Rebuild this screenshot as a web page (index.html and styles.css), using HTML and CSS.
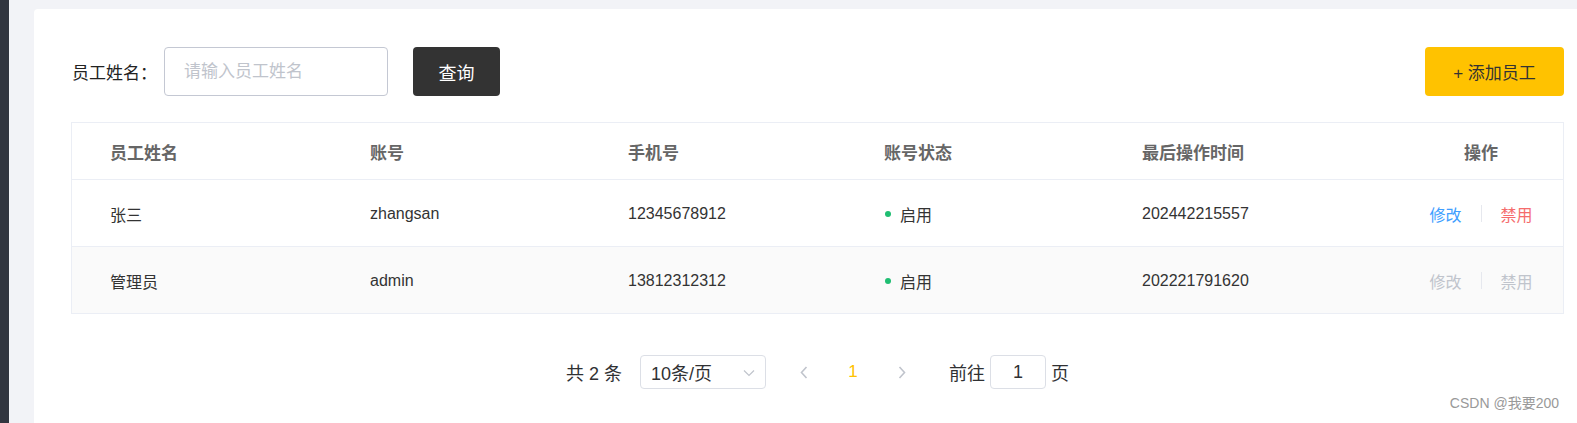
FILE: index.html
```html
<!DOCTYPE html>
<html lang="zh-CN">
<head>
<meta charset="utf-8">
<title>员工管理</title>
<link rel="stylesheet" href="styles.css">
</head>
<body>
<div class="layout">
  <aside class="sidebar"></aside>
  <main class="main">
    <section class="card">
      <div class="search-bar">
        <label class="search-label">员工姓名：</label>
        <input class="search-input" type="text" placeholder="请输入员工姓名">
        <button class="btn btn-dark">查询</button>
        <button class="btn btn-yellow">+ 添加员工</button>
      </div>

      <div class="table">
        <div class="row head">
          <div class="cell">员工姓名</div>
          <div class="cell">账号</div>
          <div class="cell">手机号</div>
          <div class="cell">账号状态</div>
          <div class="cell">最后操作时间</div>
          <div class="cell center">操作</div>
        </div>
        <div class="row">
          <div class="cell">张三</div>
          <div class="cell">zhangsan</div>
          <div class="cell">12345678912</div>
          <div class="cell"><span class="dot"></span>启用</div>
          <div class="cell">202442215557</div>
          <div class="cell center ops">
            <span class="op op-edit">修改</span><span class="sep"></span><span class="op op-ban">禁用</span>
          </div>
        </div>
        <div class="row striped">
          <div class="cell">管理员</div>
          <div class="cell">admin</div>
          <div class="cell">13812312312</div>
          <div class="cell"><span class="dot"></span>启用</div>
          <div class="cell">202221791620</div>
          <div class="cell center ops">
            <span class="op op-disabled">修改</span><span class="sep"></span><span class="op op-disabled">禁用</span>
          </div>
        </div>
      </div>

      <div class="pagination">
        <span class="total">共 2 条</span>
        <div class="select">
          <span>10条/页</span>
          <svg class="select-arrow" width="12" height="8" viewBox="0 0 12 8"><path d="M1 1.5 L6 6.5 L11 1.5" fill="none" stroke="#c0c4cc" stroke-width="1.2"/></svg>
        </div>
        <span class="pager-btn pager-prev">
          <svg width="8" height="13" viewBox="0 0 8 13"><path d="M6.5 1 L1.5 6.5 L6.5 12" fill="none" stroke="#c0c4cc" stroke-width="1.6"/></svg>
        </span>
        <span class="pager-num">1</span>
        <span class="pager-btn">
          <svg width="8" height="13" viewBox="0 0 8 13"><path d="M1.5 1 L6.5 6.5 L1.5 12" fill="none" stroke="#c0c4cc" stroke-width="1.6"/></svg>
        </span>
        <span class="jump">前往</span>
        <div class="jump-input">1</div>
        <span class="jump-suffix">页</span>
      </div>
    </section>
  </main>
</div>
<div class="watermark">CSDN @我要200</div>
</body>
</html>
```

FILE: styles.css
```css
html, body {
  margin: 0;
  padding: 0;
  height: 100%;
}
body {
  background: #f2f3f7;
  font-family: "Liberation Sans", "Noto Sans CJK SC", sans-serif;
  color: #333;
  overflow: hidden;
}
.layout {
  display: flex;
  height: 423px;
}
.sidebar {
  width: 9px;
  background: #31353f;
  flex: none;
}
.main {
  flex: 1;
  padding: 9px 0 0 25px;
  display: flex;
}
.card {
  flex: 1;
  background: #fff;
  border-radius: 4px 0 0 0;
  padding: 38px 13px 0 37px;
}
.search-bar {
  display: flex;
  align-items: center;
  height: 49px;
}
.search-label {
  width: 93px;
  font-size: 17px;
  color: #222;
  padding-left: 1px;
  box-sizing: border-box;
}
.search-input {
  width: 224px;
  height: 49px;
  box-sizing: border-box;
  border: 1px solid #c4c8d3;
  border-radius: 4px;
  padding: 0 19px;
  font-family: inherit;
  font-size: 17px;
  outline: none;
}
.search-input::placeholder {
  color: #c0c4cc;
}
.btn {
  height: 49px;
  border: none;
  border-radius: 4px;
  font-family: inherit;
  font-size: 18px;
  cursor: pointer;
}
.btn-dark {
  margin-left: 25px;
  width: 87px;
  background: #333333;
  color: #fff;
}
.btn-yellow {
  margin-left: auto;
  width: 139px;
  background: #ffc200;
  color: #333;
  font-size: 17px;
}
.table {
  margin-top: 26px;
  border: 1px solid #ebeef5;
  border-bottom: none;
}
.row {
  display: grid;
  grid-template-columns: 260px 258px 256px 258px 295px 1fr;
  height: 66px;
  border-bottom: 1px solid #ebeef5;
  font-size: 16px;
}
.row.head {
  height: 56px;
  font-size: 17px;
  font-weight: bold;
  color: #666;
}
.row.striped {
  background: #fafafa;
}
.cell {
  display: flex;
  align-items: center;
  padding-left: 38px;
  padding-top: 1px;
}
.row.head .cell {
  padding-top: 0;
}
.cell.center {
  justify-content: center;
  padding-left: 0;
  padding-right: 0;
}
.dot {
  width: 6px;
  height: 6px;
  border-radius: 50%;
  background: #1fbe72;
  margin: 0 9px 0 1px;
}
.op {
  font-size: 16px;
}
.op-edit { color: #409eff; }
.op-ban { color: #f56c6c; }
.op-disabled { color: #c0c4cc; }
.sep {
  width: 1px;
  height: 17px;
  background: #e6e8ee;
  margin: 0 19px 0 19px;
}
.pagination {
  margin-top: 41px;
  display: flex;
  align-items: center;
  justify-content: center;
  height: 34px;
  font-size: 18px;
  color: #303133;
}
.total {
  margin-right: 18px;
}
.select {
  width: 126px;
  height: 34px;
  box-sizing: border-box;
  border: 1px solid #dcdfe6;
  border-radius: 4px;
  display: flex;
  align-items: center;
  padding: 0 10px 0 10px;
  justify-content: space-between;
}
.select-arrow {
  margin-top: 1px;
}
.pager-btn {
  width: 48px;
  display: flex;
  justify-content: center;
  align-items: center;
}
.pager-prev {
  margin-left: 14px;
}
.pager-num {
  width: 50px;
  text-align: center;
  color: #ffc200;
  font-size: 17px;
}
.jump {
  margin-left: 23px;
  margin-right: 5px;
}
.jump-input {
  width: 56px;
  height: 34px;
  box-sizing: border-box;
  border: 1px solid #dcdfe6;
  border-radius: 4px;
  display: flex;
  align-items: center;
  justify-content: center;
}
.jump-suffix {
  margin-left: 5px;
}
.watermark {
  position: absolute;
  right: 18px;
  bottom: 11px;
  font-size: 14px;
  color: #999;
}
```
